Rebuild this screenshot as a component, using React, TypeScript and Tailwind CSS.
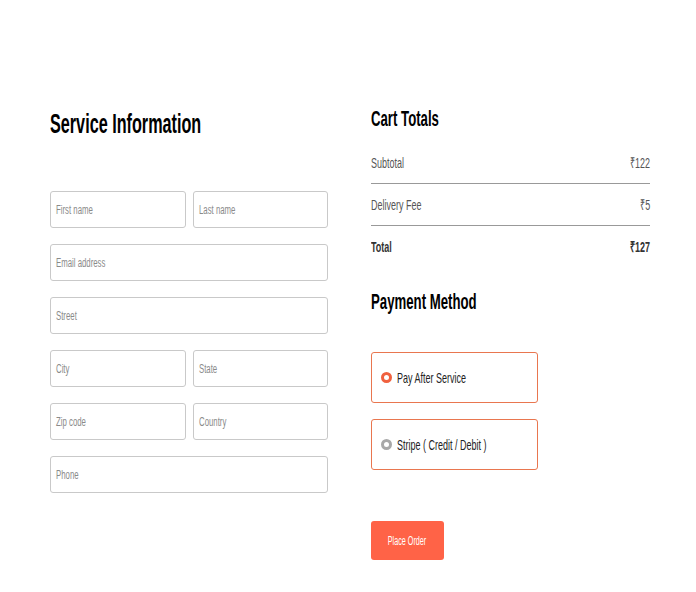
import React, { useState } from 'react';

const font = { fontFamily: '"Liberation Sans", Arial, sans-serif' };

const Field = ({ placeholder }: { placeholder: string }) => {
  const [value, setValue] = useState('');
  return (
    <div className="relative w-full">
      <input
        value={value}
        onChange={(e) => setValue(e.target.value)}
        className="h-[37px] w-full rounded-[3px] border border-[#c9c9c9] px-[6px] text-[12px] text-[#333] outline-none"
      />
      {!value && (
        <span className="pointer-events-none absolute left-[6px] top-1/2 -translate-y-1/2 origin-left scale-x-[0.65] whitespace-nowrap text-[12px] text-[#8a8a8a]">
          {placeholder}
        </span>
      )}
    </div>
  );
};

const Row = ({ label, value, bold = false }: { label: string; value: string; bold?: boolean }) => (
  <div className={`flex items-center justify-between text-[15px] leading-[20px] ${bold ? 'font-bold text-[#333]' : 'text-[#555]'}`}>
    <span className="inline-block origin-left scale-x-[0.6] whitespace-nowrap">{label}</span>
    <span className="inline-block origin-right scale-x-[0.6] whitespace-nowrap">{value}</span>
  </div>
);

export default function App() {
  const [method, setMethod] = useState<'cod' | 'stripe'>('cod');

  const option = (key: 'cod' | 'stripe', label: string) => (
    <button
      onClick={() => setMethod(key)}
      className="flex h-[51px] w-[167px] items-center gap-[5px] rounded-[3px] border border-[#e9764f] px-[9px] text-left text-[15px] leading-[20px] text-[#222]"
    >
      <span
        className={`h-[11px] w-[11px] shrink-0 rounded-full border-[3px] bg-white ${key === method ? 'border-[#f0613f]' : 'border-[#a8a8a8]'}`}
      />
      <span className="inline-block origin-left scale-x-[0.6] whitespace-nowrap">{label}</span>
    </button>
  );

  return (
    <div style={font} className="min-h-[592px] w-[696px] bg-white">
      <div className="flex gap-[43px] pl-[50px] pt-[108px]">
        <div className="flex w-[278px] shrink-0 flex-col">
          <h2 className="text-[27px] font-bold leading-[32px] text-black">
            <span className="inline-block origin-left scale-x-[0.6] whitespace-nowrap">Service Information</span>
          </h2>
          <div className="mt-[51px] flex flex-col gap-[16px]">
            <div className="flex gap-[7px]">
              <Field placeholder="First name" />
              <Field placeholder="Last name" />
            </div>
            <Field placeholder="Email address" />
            <Field placeholder="Street" />
            <div className="flex gap-[7px]">
              <Field placeholder="City" />
              <Field placeholder="State" />
            </div>
            <div className="flex gap-[7px]">
              <Field placeholder="Zip code" />
              <Field placeholder="Country" />
            </div>
            <Field placeholder="Phone" />
          </div>
        </div>

        <div className="-mt-[2px] flex w-[279px] shrink-0 flex-col">
          <h2 className="text-[22px] font-bold leading-[26px] text-black">
            <span className="inline-block origin-left scale-x-[0.6] whitespace-nowrap">Cart Totals</span>
          </h2>
          <div className="mt-[21px] flex flex-col">
            <Row label="Subtotal" value="₹122" />
            <hr className="mt-[10px] mb-[11px] border-[#999]" />
            <Row label="Delivery Fee" value="₹5" />
            <hr className="mt-[10px] mb-[11px] border-[#999]" />
            <Row label="Total" value="₹127" bold />
          </div>
          <h2 className="mt-[32px] text-[22px] font-bold leading-[26px] text-black">
            <span className="inline-block origin-left scale-x-[0.6] whitespace-nowrap">Payment Method</span>
          </h2>
          <div className="mt-[37px] flex flex-col gap-[16px]">
            {option('cod', 'Pay After Service')}
            {option('stripe', 'Stripe ( Credit / Debit )')}
          </div>
          <button className="mt-[51px] flex h-[39px] w-[73px] items-center justify-center rounded-[3px] bg-[#ff6347] text-[12px] text-white">
            <span className="inline-block scale-x-[0.6] whitespace-nowrap">Place Order</span>
          </button>
        </div>
      </div>
    </div>
  );
}
